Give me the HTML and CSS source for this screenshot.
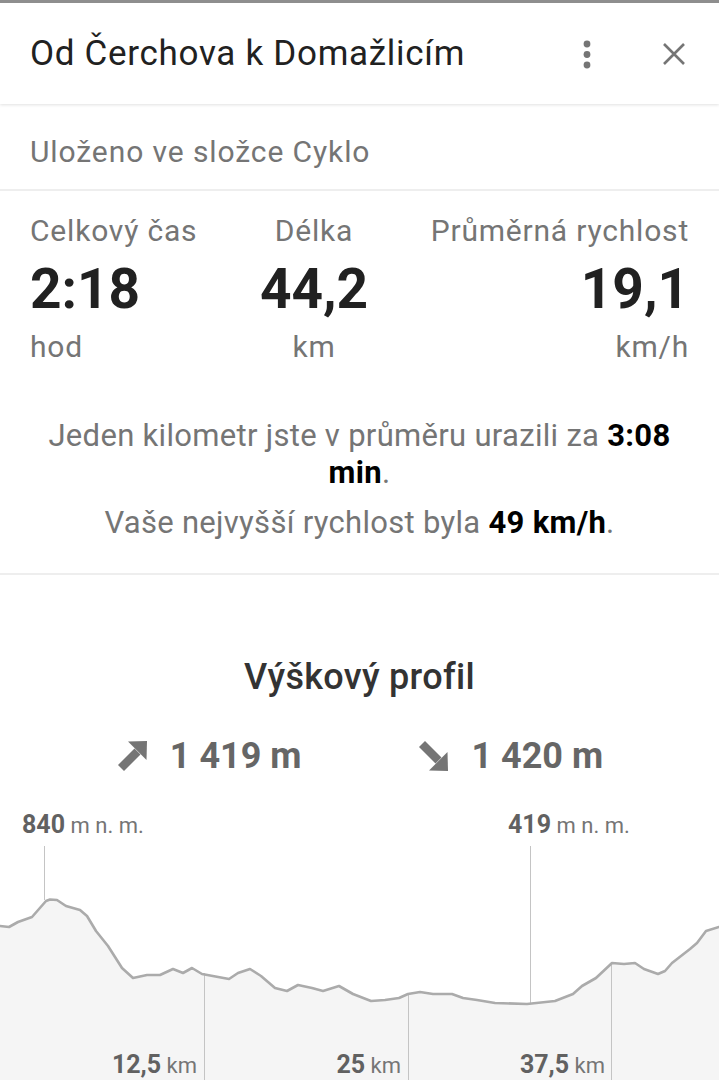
FILE: index.html
```html
<!DOCTYPE html>
<html lang="cs">

<head>
    <meta charset="UTF-8">
    <meta name="viewport" content="width=device-width, initial-scale=1.0">
    <title>Od Čerchova k Domažlicím</title>
    <link rel="stylesheet" href="styles.css">
</head>

<body>
    <header class="top-bar">
        <h1 class="title">Od Čerchova k Domažlicím</h1>
        <div class="actions">
            <svg class="icon-more" width="24" height="32" viewBox="0 0 24 32">
                <circle cx="12" cy="6" r="3.4" />
                <circle cx="12" cy="16.5" r="3.4" />
                <circle cx="12" cy="27" r="3.4" />
            </svg>
            <svg class="icon-close" width="26" height="26" viewBox="0 0 26 26">
                <path d="M3 3 L23 23 M23 3 L3 23" />
            </svg>
        </div>
    </header>

    <section class="folder">Uloženo ve složce Cyklo</section>

    <section class="summary">
        <div class="stats">
            <div class="stat stat-left">
                <div class="stat-label">Celkový čas</div>
                <div class="stat-value">2:18</div>
                <div class="stat-unit">hod</div>
            </div>
            <div class="stat stat-center">
                <div class="stat-label">Délka</div>
                <div class="stat-value">44,2</div>
                <div class="stat-unit">km</div>
            </div>
            <div class="stat stat-right">
                <div class="stat-label">Průměrná rychlost</div>
                <div class="stat-value">19,1</div>
                <div class="stat-unit">km/h</div>
            </div>
        </div>
        <p class="note">Jeden kilometr jste v průměru urazili za <b>3:08 min</b>.</p>
        <p class="note note-second">Vaše nejvyšší rychlost byla <b>49 km/h</b>.</p>
    </section>

    <section class="profile">
        <h2 class="profile-title">Výškový profil</h2>
        <div class="climb">
            <div class="climb-item">
                <svg class="arrow" width="32" height="32" viewBox="0 0 32 32">
                    <polygon points="31,1 12,1.5 30.5,20" />
                    <polygon points="18.5,8.5 24.5,14.5 8,31 2,25" />
                </svg>
                <span>1 419 m</span>
            </div>
            <div class="climb-item">
                <svg class="arrow" width="32" height="32" viewBox="0 0 32 32">
                    <polygon points="31,31 12,30.5 30.5,12" />
                    <polygon points="18.5,23.5 24.5,17.5 8,1 2,7" />
                </svg>
                <span>1 420 m</span>
            </div>
        </div>

        <div class="chart">
            <svg class="chart-svg" width="719" height="290" viewBox="0 0 719 290">
                <polygon class="area" points="0,125 9,126 18,121 32,116 39,108 46,100 50,98.5 57,99 66,105 80,109 87,115 96,130 108,145 122,167 133,177 147,174 160,174 173,168 183,172 192,167 202,173 229,178 238,172 250,168 261,175 275,187 287,190 298,184 312,187 323,190 339,185 353,193 371,200 385,199 399,197 408,193 420,191 433,193 452,193 463,197 477,199 495,202 527,203 555,200 573,193 582,185 596,177 612,162 624,163 635,162 644,168 658,173 665,170 672,162 690,148 697,142 706,130 719,126 719,290 0,290" />
                <line class="marker" x1="44.5" y1="45" x2="44.5" y2="99" />
                <line class="marker" x1="530.5" y1="45" x2="530.5" y2="203" />
                <line class="marker" x1="204.5" y1="172" x2="204.5" y2="290" />
                <line class="marker" x1="408.5" y1="193" x2="408.5" y2="290" />
                <line class="marker" x1="611.5" y1="162" x2="611.5" y2="290" />
                <polyline class="line" points="0,125 9,126 18,121 32,116 39,108 46,100 50,98.5 57,99 66,105 80,109 87,115 96,130 108,145 122,167 133,177 147,174 160,174 173,168 183,172 192,167 202,173 229,178 238,172 250,168 261,175 275,187 287,190 298,184 312,187 323,190 339,185 353,193 371,200 385,199 399,197 408,193 420,191 433,193 452,193 463,197 477,199 495,202 527,203 555,200 573,193 582,185 596,177 612,162 624,163 635,162 644,168 658,173 665,170 672,162 690,148 697,142 706,130 719,126" />
            </svg>
            <div class="peak peak-max"><b>840</b> m n. m.</div>
            <div class="peak peak-min"><b>419</b> m n. m.</div>
            <div class="dist dist-1"><b>12,5</b> km</div>
            <div class="dist dist-2"><b>25</b> km</div>
            <div class="dist dist-3"><b>37,5</b> km</div>
        </div>
    </section>
</body>

</html>
```

FILE: styles.css
```css
html,
body {
    margin: 0;
    height: 100%;
    overflow: hidden;
    background: #ffffff;
    font-family: Roboto, "Noto Sans", sans-serif;
}

body {
    border-top: 3px solid #8e8e8e;
}

.top-bar {
    position: relative;
    z-index: 1;
    display: flex;
    align-items: center;
    justify-content: space-between;
    height: 101px;
    padding: 0 30px;
    box-sizing: border-box;
    background: #ffffff;
    box-shadow: 0 1px 3px rgba(0, 0, 0, 0.12);
}

.title {
    margin: 0;
    font-size: 35px;
    font-weight: 400;
    letter-spacing: 0.7px;
    line-height: 40px;
    color: #212121;
}

.actions {
    display: flex;
    align-items: center;
    gap: 62px;
    margin-right: 2px;
}

.icon-more {
    fill: #757575;
}

.icon-close path {
    stroke: #757575;
    stroke-width: 2.6;
    fill: none;
}

.folder {
    padding: 30px 30px 19px;
    font-size: 30px;
    letter-spacing: 0.9px;
    line-height: 36px;
    color: #757575;
    border-bottom: 2px solid #eeeeee;
}

.summary {
    padding: 22px 30px 32px;
    border-bottom: 2px solid #eeeeee;
}

.stats {
    display: flex;
    justify-content: space-between;
}

.stat-left {
    text-align: left;
}

.stat-center {
    text-align: center;
}

.stat-right {
    text-align: right;
}

.stat-label,
.stat-unit {
    font-size: 30px;
    letter-spacing: 0.8px;
    line-height: 36px;
    color: #757575;
}

.stat-value {
    margin-top: 10px;
    font-size: 55px;
    font-weight: 700;
    line-height: 60px;
    color: #212121;
}

.stat-unit {
    margin-top: 10px;
}

.note {
    margin: 52px 0 0;
    text-align: center;
    font-size: 31px;
    letter-spacing: 0.3px;
    line-height: 37px;
    color: #757575;
}

.note b {
    color: #000000;
}

.note-second {
    margin-top: 13px;
}

.profile {
    padding-top: 82px;
}

.profile-title {
    margin: 0;
    text-align: center;
    font-size: 36px;
    font-weight: 500;
    letter-spacing: 0.3px;
    line-height: 40px;
    color: #333333;
}

.climb {
    display: flex;
    justify-content: space-evenly;
    margin-top: 37px;
}

.climb-item {
    display: flex;
    align-items: center;
    gap: 22px;
    font-size: 36px;
    font-weight: 700;
    line-height: 44px;
    color: #666666;
}

.arrow {
    fill: #757575;
}

.chart {
    position: relative;
    height: 290px;
    margin-top: 23px;
}

.chart-svg {
    position: absolute;
    top: 0;
    left: 0;
}

.area {
    fill: #f5f5f5;
}

.line {
    fill: none;
    stroke: #ababab;
    stroke-width: 2.6;
    stroke-linejoin: round;
    stroke-linecap: round;
}

.marker {
    stroke: #c4c4c4;
    stroke-width: 1;
}

.peak,
.dist {
    position: absolute;
    font-size: 22px;
    line-height: 28px;
    color: #757575;
    white-space: nowrap;
}

.peak b,
.dist b {
    font-size: 25px;
    color: #616161;
}

.peak {
    top: 10px;
}

.peak-max {
    left: 22px;
}

.peak-min {
    left: 508px;
}

.dist {
    top: 250px;
}

.dist-1 {
    right: 522px;
}

.dist-2 {
    right: 318px;
}

.dist-3 {
    right: 114px;
}
```
